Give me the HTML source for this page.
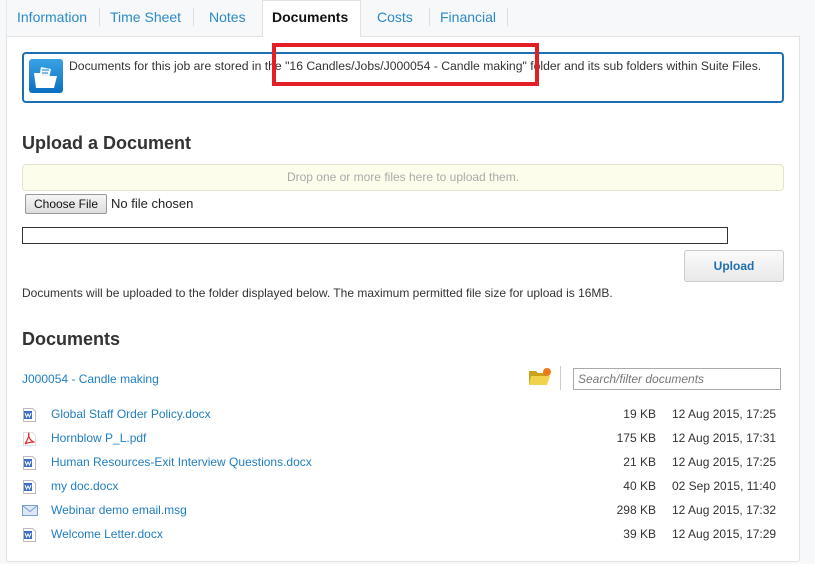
<!DOCTYPE html>
<html><head><meta charset="utf-8"><style>
*{margin:0;padding:0;box-sizing:border-box}
body{width:815px;height:564px;background:#f7f8f9;font-family:"Liberation Sans",Arial,sans-serif;font-size:12px;color:#333;position:relative;overflow:hidden}
.a{position:absolute;white-space:nowrap}
.tab{position:absolute;top:9px;font-size:14px;color:#2a8ac7}
.sep{position:absolute;top:8px;width:1px;height:18px;background:#ddd}
.link{color:#1f7ec2}
</style></head><body>
<div class="a" style="left:6px;top:36px;width:794px;height:526px;background:#fff;border:1px solid #e2e2e2;border-radius:0 0 3px 3px"></div>
<div class="a" style="left:6px;top:0;width:1px;height:36px;background:#e8e8e8"></div>
<div class="tab" style="left:17px">Information</div><div class="sep" style="left:99px"></div>
<div class="tab" style="left:110px">Time Sheet</div><div class="sep" style="left:193px"></div>
<div class="tab" style="left:209px">Notes</div>
<div class="a" style="left:262px;top:0;width:99px;height:37px;background:#fff;border:1px solid #e2e2e2;border-bottom:none"></div>
<div class="tab" style="left:272px;color:#111;font-weight:bold">Documents</div>
<div class="tab" style="left:377px">Costs</div><div class="sep" style="left:429px"></div>
<div class="tab" style="left:440px">Financial</div><div class="sep" style="left:507px"></div>

<div class="a" style="left:22px;top:52px;width:762px;height:51px;border:2px solid #1a6fb5;border-radius:4px"></div>
<div class="a" style="left:29px;top:59px;width:34px;height:34px;border-radius:3px;background:linear-gradient(#3aa3e6,#0a6fbf)">
<svg width="34" height="34" viewBox="0 0 34 34"><path d="M10 19 L12 8 L22 10 L20 20Z" fill="#fff" opacity=".9"/><path d="M13 11h7M13 14h6" stroke="#1a7fcf" stroke-width="1"/><path d="M5 14h7l2 3h14l-3 12H7Z" fill="#fff"/></svg></div>
<div class="a" style="left:69px;top:59px;font-size:12.2px;color:#333">Documents for this job are stored in the "16 Candles/Jobs/J000054 - Candle making" folder and its sub folders within Suite Files.</div>
<div class="a" style="left:272px;top:43px;width:267px;height:43px;border:4px solid #e31e24"></div>

<div class="a" style="left:22px;top:133px;font-size:18px;font-weight:bold;color:#333">Upload a Document</div>
<div class="a" style="left:22px;top:164px;width:762px;height:27px;background:#fdfdeb;border:1px solid #e3e3d0;border-radius:4px;text-align:center;line-height:25px;color:#aaa;font-size:12px">Drop one or more files here to upload them.</div>
<div class="a" style="left:25px;top:194px;width:82px;height:20px;border:1px solid #999;border-radius:2px;background:linear-gradient(#f6f6f6,#dcdcdc);font-size:12px;text-align:center;line-height:18px;color:#111">Choose File</div>
<div class="a" style="left:111px;top:196px;font-size:13px;color:#222">No file chosen</div>
<div class="a" style="left:22px;top:227px;width:706px;height:17px;border:1px solid #333"></div>
<div class="a" style="left:684px;top:250px;width:100px;height:32px;border:1px solid #ccc;border-radius:3px;background:linear-gradient(#fafafa,#e9e9e9);text-align:center;line-height:30px;font-weight:bold;color:#1f6fb0">Upload</div>
<div class="a" style="left:22px;top:286px;font-size:12px">Documents will be uploaded to the folder displayed below. The maximum permitted file size for upload is 16MB.</div>

<div class="a" style="left:22px;top:329px;font-size:18px;font-weight:bold;color:#333">Documents</div>
<div class="a link" style="left:22px;top:372px">J000054 - Candle making</div>
<div class="a" style="left:528px;top:367px"><svg width="24" height="20" viewBox="0 0 24 20"><path d="M1 4h7l2 2h9v12H1Z" fill="#c9a21a"/><path d="M3 9h19l-3 9H1Z" fill="#f0d34a"/><circle cx="19" cy="5" r="4" fill="#f07a1a"/></svg></div>
<div class="a" style="left:560px;top:366px;width:1px;height:24px;background:#ccc"></div>
<div class="a" style="left:573px;top:368px;width:208px;height:22px;border:1px solid #aaa;font-style:italic;color:#777;padding-left:4px;line-height:20px">Search/filter documents</div>

<div class="a" style="left:23px;top:408px"><svg width="13" height="14"><path d="M0.5 .5h9l3 3v10H.5Z" fill="#fff" stroke="#bbb"/><rect x="1" y="3" width="8" height="8" fill="#3a6fc4"/><path d="M2 5l1.5 4 1.5-3 1.5 3L8 5" stroke="#fff" fill="none" stroke-width="1"/></svg></div>
<div class="a link" style="left:51px;top:407px">Global Staff Order Policy.docx</div><div class="a" style="right:159px;top:407px">19 KB</div><div class="a" style="left:672px;top:407px">12 Aug 2015, 17:25</div>
<div class="a" style="left:23px;top:432px"><svg width="13" height="14"><path d="M0.5 .5h9l3 3v10H.5Z" fill="#fff" stroke="#ddd"/><path d="M2 12c2-3 4-8 4-10s-1 0 0 3 4 5 5 5-6 0-9 2" stroke="#e0302a" fill="none" stroke-width="1.2"/></svg></div>
<div class="a link" style="left:51px;top:431px">Hornblow P_L.pdf</div><div class="a" style="right:159px;top:431px">175 KB</div><div class="a" style="left:672px;top:431px">12 Aug 2015, 17:31</div>
<div class="a" style="left:23px;top:456px"><svg width="13" height="14"><path d="M0.5 .5h9l3 3v10H.5Z" fill="#fff" stroke="#bbb"/><rect x="1" y="3" width="8" height="8" fill="#3a6fc4"/><path d="M2 5l1.5 4 1.5-3 1.5 3L8 5" stroke="#fff" fill="none"/></svg></div>
<div class="a link" style="left:51px;top:455px">Human Resources-Exit Interview Questions.docx</div><div class="a" style="right:159px;top:455px">21 KB</div><div class="a" style="left:672px;top:455px">12 Aug 2015, 17:25</div>
<div class="a" style="left:23px;top:480px"><svg width="13" height="14"><path d="M0.5 .5h9l3 3v10H.5Z" fill="#fff" stroke="#bbb"/><rect x="1" y="3" width="8" height="8" fill="#3a6fc4"/><path d="M2 5l1.5 4 1.5-3 1.5 3L8 5" stroke="#fff" fill="none"/></svg></div>
<div class="a link" style="left:51px;top:479px">my doc.docx</div><div class="a" style="right:159px;top:479px">40 KB</div><div class="a" style="left:672px;top:479px">02 Sep 2015, 11:40</div>
<div class="a" style="left:22px;top:505px"><svg width="16" height="12"><rect x=".5" y=".5" width="15" height="10" fill="#dde8f6" stroke="#7a9fd0"/><path d="M.5 .5l7.5 6 7.5-6" stroke="#7a9fd0" fill="none"/></svg></div>
<div class="a link" style="left:51px;top:503px">Webinar demo email.msg</div><div class="a" style="right:159px;top:503px">298 KB</div><div class="a" style="left:672px;top:503px">12 Aug 2015, 17:32</div>
<div class="a" style="left:23px;top:528px"><svg width="13" height="14"><path d="M0.5 .5h9l3 3v10H.5Z" fill="#fff" stroke="#bbb"/><rect x="1" y="3" width="8" height="8" fill="#3a6fc4"/><path d="M2 5l1.5 4 1.5-3 1.5 3L8 5" stroke="#fff" fill="none"/></svg></div>
<div class="a link" style="left:51px;top:527px">Welcome Letter.docx</div><div class="a" style="right:159px;top:527px">39 KB</div><div class="a" style="left:672px;top:527px">12 Aug 2015, 17:29</div>
</body></html>
